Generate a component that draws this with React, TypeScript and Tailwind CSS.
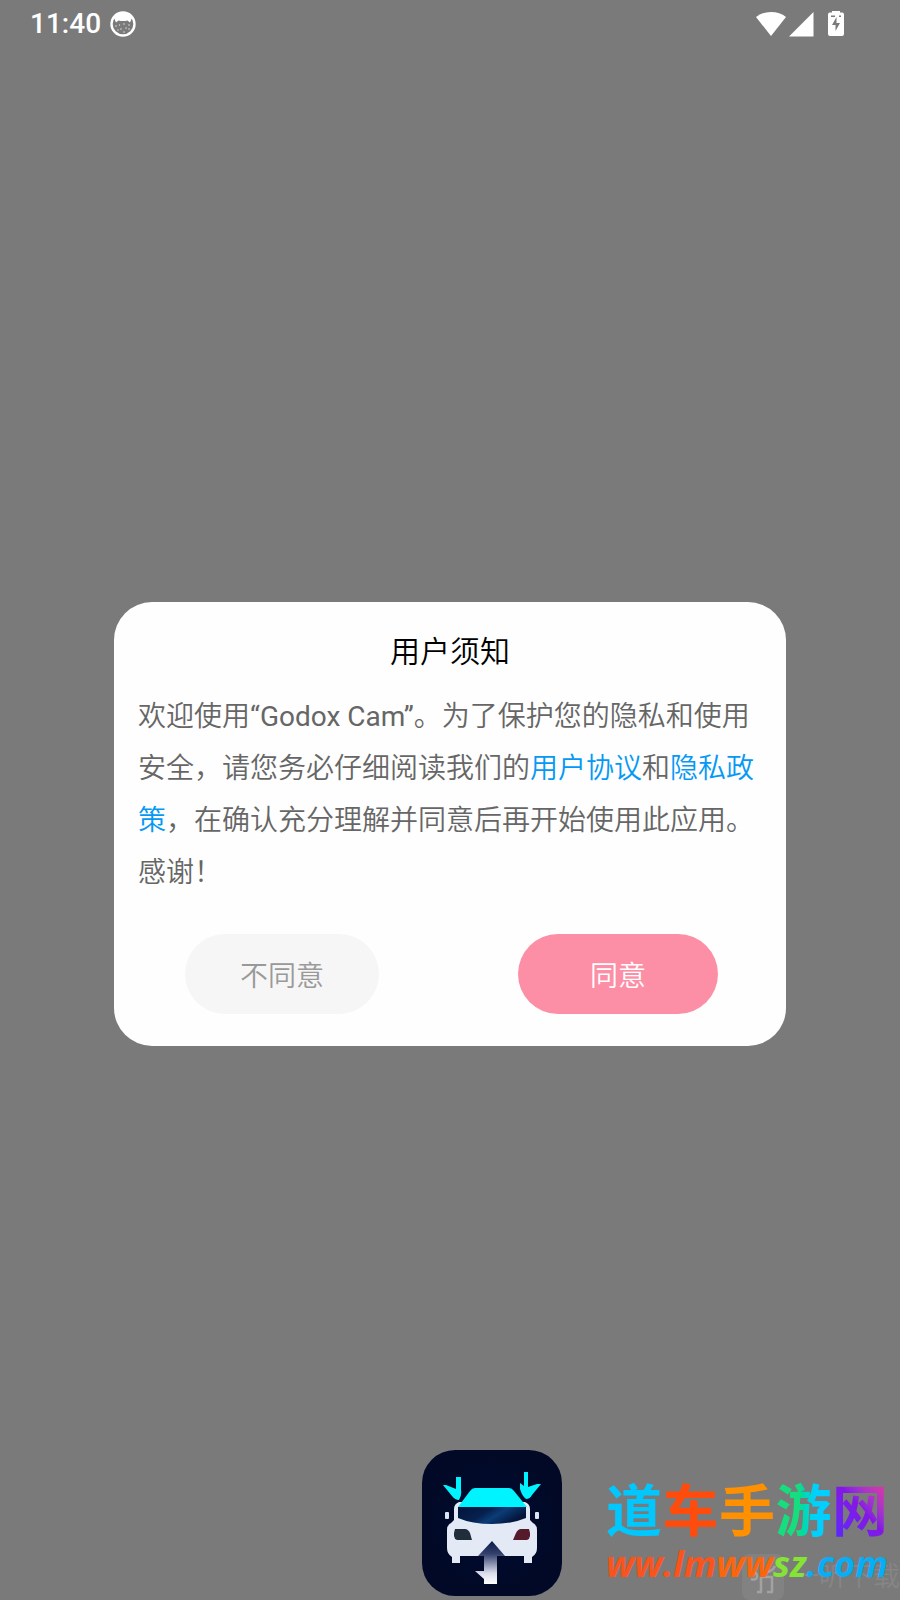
import type { ReactNode } from "react";

function StatusBar() {
  return (
    <header className="flex h-12 items-center pl-[30px] pr-14">
      <time className="font-['Roboto','Liberation_Sans',sans-serif] text-[28px] font-medium leading-8">11:40</time>
      <svg viewBox="0 0 26 26" className="ml-[9px] size-[26px]" aria-hidden="true">
        <circle cx="13" cy="13" r="11.5" fill="none" stroke="#fff" strokeWidth="2.4" />
        <path d="M4 7Q7 2 13 2T22 7L20 11.500 17.500 9.500Q13 10.500 8.500 9.500L6 11.500Z" fill="#fff" />
        <g fill="#fff" opacity=".7">
          <circle cx="6" cy="15" r=".8" />
          <circle cx="9.500" cy="14" r=".7" />
          <circle cx="14" cy="13" r=".8" />
          <circle cx="19" cy="14" r=".8" />
          <circle cx="11" cy="18" r=".8" />
          <circle cx="16" cy="17" r=".8" />
          <circle cx="8" cy="19" r=".7" />
          <circle cx="14" cy="21" r=".8" />
          <circle cx="19" cy="18" r=".8" />
        </g>
      </svg>
      <div className="ml-auto flex items-center">
        <svg viewBox="0 0 30 26" className="h-[26px] w-[30px]" aria-hidden="true">
          <path d="M0 6Q6 1 15 1T30 6L15 25Z" fill="#fff" />
        </svg>
        <svg viewBox="0 0 26 26" className="ml-[2px] size-[26px]" aria-hidden="true">
          <path d="M25.500 1V25.500H1Z" fill="#fff" />
        </svg>
        <svg viewBox="0 0 16 26" className="ml-[14px] h-[26px] w-4" aria-hidden="true">
          <path d="M4 0H12V1.500H14Q16 1.500 16 3.500V23Q16 25 14 25H2Q0 25 0 23V3.500Q0 1.500 2 1.500H4Z" fill="#fff" />
          <path d="M8.500 6V12H12L7.500 20V14H4ZM3 4.500H7V6H3ZM11 4.500H13V6H11Z" fill="#7a7a7a" />
        </svg>
      </div>
    </header>
  );
}

function TextLink({ children }: { children: ReactNode }) {
  return <a href="#" className="text-[#0599f5]">{children}</a>;
}

function NoticeDialog() {
  return (
    <section role="dialog" aria-labelledby="notice-title" className="mx-auto w-full max-w-[672px] rounded-[38px] bg-[#fefefe] px-6 pt-6 pb-8">
      <h1 id="notice-title" className="text-center text-[30px] leading-[52px] text-black">用户须知</h1>
      <p className="mt-[13px] text-[28px] leading-[52px] text-[#666]">
        欢迎使用“Godox Cam”。为了保护您的隐私和使用安全，请您务必仔细阅读我们的<TextLink>用户协议</TextLink>和<TextLink>隐私政策</TextLink>，在确认充分理解并同意后再开始使用此应用。感谢！
      </p>
      <div className="mt-[35px] flex justify-between pl-[47px] pr-11 text-[28px]">
        <button type="button" className="h-20 w-[194px] rounded-full bg-[#f6f6f6] pt-[6px] text-[#999]">不同意</button>
        <button type="button" className="h-20 w-[200px] rounded-full bg-[#fc8fa5] pt-[6px] text-white">同意</button>
      </div>
    </section>
  );
}

function CarLogo() {
  return (
    <svg viewBox="0 0 140 146" className="h-[146px] w-[140px] shrink-0" aria-hidden="true">
      <defs>
        <radialGradient id="plate">
          <stop offset="0" stopColor="#000b30" />
          <stop offset="1" stopColor="#010926" />
        </radialGradient>
        <linearGradient id="arrow" x1="0" y1="0" x2="0" y2="1">
          <stop offset="0" stopColor="#0b1c4a" />
          <stop offset=".3" stopColor="#34406c" />
          <stop offset=".75" stopColor="#dcddec" />
          <stop offset="1" stopColor="#fff" />
        </linearGradient>
        <linearGradient id="glass" x2="1" y2=".4">
          <stop offset="0" stopColor="#04143a" />
          <stop offset=".45" stopColor="#06204e" />
          <stop offset=".65" stopColor="#0b3d78" />
          <stop offset="1" stopColor="#04143a" />
        </linearGradient>
      </defs>
      <rect width="140" height="146" rx="33" fill="url(#plate)" />
      <path d="M24 63h2v5h-2zM114 63h2v5h-2z" fill="#dde5f2" stroke="#dde5f2" strokeWidth="2" strokeLinejoin="round" />
      <path d="M37 52Q32 54 32 59V70L29 73Q25 75 25 80V98Q25 104 30 107V113H38V106H102V113H110V107Q115 104 115 98V80Q115 75 111 73L108 70V59Q108 54 103 52Z" fill="#e3eaf5" />
      <path d="M36 57H104V68Q90 74 70 74T36 68Z" fill="url(#glass)" />
      <path d="M48 41Q50 38 53 38H87Q90 38 92 41L105 57H36Z" fill="#00f4ff" />
      <path d="M34 27H39V40Q40 45 37 50Q33 50 30 46L21 35H24L34 39ZM102 22H106V37L115 34H119L110 45Q108 49 104 49Q100 46 98 39V33L102 36Z" fill="#00f4ff" />
      <path d="M33 79H43Q46 79 48 83L50 90H35Q30 88 33 79Z" fill="#222d3b" />
      <path d="M107 79H99Q96 79 94 83L91 90H105Q110 88 107 79Z" fill="#551b2b" />
      <path d="M70 91L83 106H75V134H62V129L53 121H62V106H56Z" fill="url(#arrow)" />
    </svg>
  );
}

function SiteMark() {
  return (
    <div className="relative flex w-[290px] flex-col pb-3">
      <strong className="flex w-[282px] justify-between pb-[6px] font-['Noto_Sans_CJK_SC',sans-serif] text-[56px] font-bold leading-[62px]">
        <span className="text-[#00c8ff]">道</span>
        <span className="text-[#ff4b0b]">车</span>
        <span className="text-[#ff9000]">手</span>
        <span className="bg-linear-to-r from-[#16dd7d] from-40% to-[#00cfff] to-70% bg-clip-text text-transparent">游</span>
        <span className="bg-linear-to-tr from-[#5726ff] via-[#8416e5] to-[#fa258b] bg-clip-text text-transparent">网</span>
      </strong>
      <a href="#" className="whitespace-nowrap font-['Open_Sans','Noto_Sans',sans-serif] text-[36px] font-bold italic leading-10">
        <span className="text-[#fa541c]">ww.lm</span>
        <span className="text-[#fc660b]">ww</span>
        <span className="text-[#84e334]">sz</span>
        <span className="text-[#08aef5]">.com</span>
      </a>
    </div>
  );
}

function DownloadMark() {
  return (
    <div className="absolute right-0 bottom-0 flex items-center gap-2 text-[27px] leading-11 text-[#868686]">
      <svg viewBox="0 0 42 46" className="h-[46px] w-[42px]" aria-hidden="true">
        <rect width="42" height="46" rx="8" fill="#828282" />
        <g fill="none" stroke="#a2a2a2" strokeWidth="2.5">
          <path d="M9 19Q15 17 15 22T9 25M19 38V23H30V38M25 18Q31 17 33 12" />
          <path d="M15 38H20M25 38H31" />
        </g>
      </svg>
      <span>一听下载</span>
    </div>
  );
}

export default function App() {
  return (
    <main className="relative flex min-h-screen flex-col overflow-hidden bg-[#7a7a7a] font-['Roboto','Noto_Sans_CJK_SC_DemiLight','Noto_Sans_CJK_SC_Light','Noto_Sans_CJK_SC',sans-serif] text-white" lang="zh-CN">
      <StatusBar />
      <div className="flex flex-1 items-center px-8">
        <NoticeDialog />
      </div>
      {/* floating marks over the backdrop */}
      <footer className="absolute right-0 bottom-0 flex items-end justify-end gap-11 pr-1 pb-1">
        <DownloadMark />
        <CarLogo />
        <SiteMark />
      </footer>
    </main>
  );
}
